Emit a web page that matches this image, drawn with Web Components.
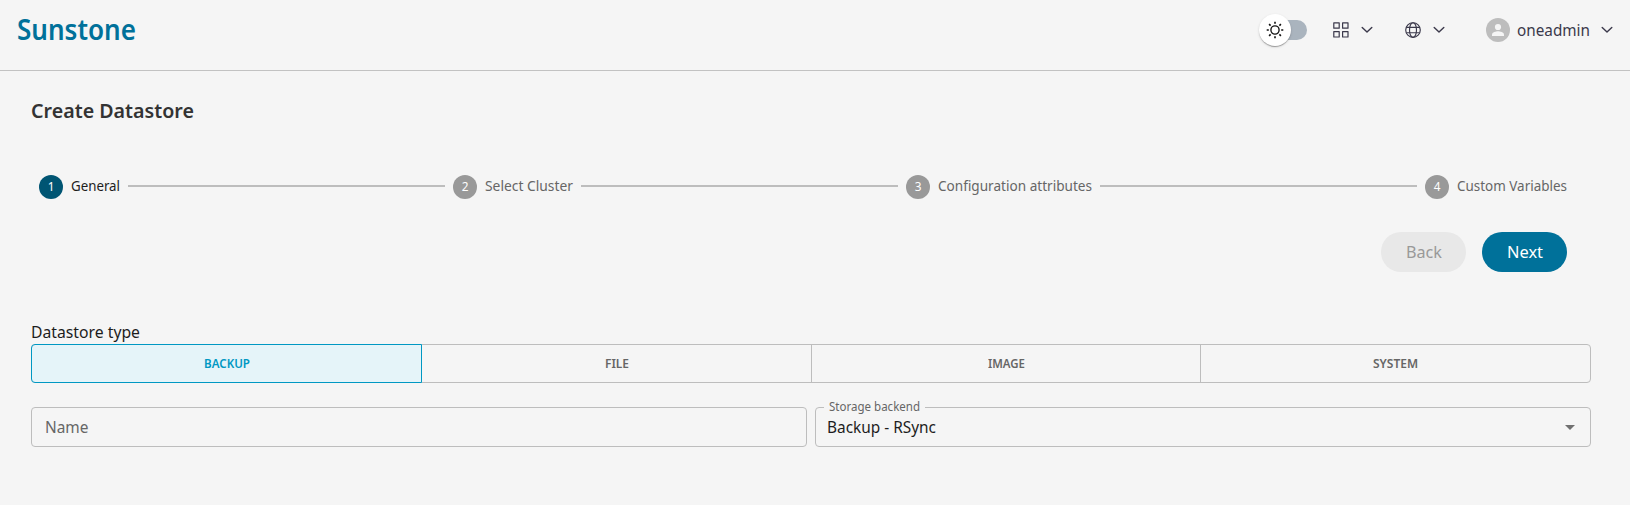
<!DOCTYPE html>
<html lang="en">
<head>
<meta charset="utf-8">
<title>Sunstone</title>
<style>
html,body{margin:0;padding:0;background:#f5f5f5;}
body{font-family:"Noto Sans","Open Sans",sans-serif;color:#1d1d1d;overflow:hidden;height:505px}
</style>
</head>
<body>
<sun-app></sun-app>
<script>
const define=(name,html,setup)=>{
  const t=document.createElement('template');
  t.innerHTML=html;
  customElements.define(name,class extends HTMLElement{
    connectedCallback(){
      if(this.shadowRoot)return;
      this.attachShadow({mode:'open'}).appendChild(t.content.cloneNode(true));
      if(setup)setup(this,this.shadowRoot);
    }
  });
};

/* One line of text condensed or expanded to a set width */
define('fit-text',`<style>
:host{display:block;flex:none;white-space:nowrap}
span{display:inline-block;transform-origin:0 50%;white-space:nowrap}
</style><span><slot></slot></span>`,(el,root)=>{
  const w=+el.getAttribute('w'),s=root.querySelector('span');
  el.style.width=w+'px';
  s.style.transform='scaleX('+(w/s.getBoundingClientRect().width)+')';
});

define('chevron-icon',`<style>:host{display:block;flex:none;width:12px;height:8px}svg{display:block}</style>
<svg width="12" height="8" viewBox="0 0 12 8" fill="none" stroke="#3b394b" stroke-width="1.4" stroke-linecap="round" stroke-linejoin="round"><path d="M1.2 1.5 6 6.1l4.8-4.6"/></svg>`);

define('grid-icon',`<style>:host{display:block;flex:none;width:16px;height:16px}svg{display:block}</style>
<svg width="16" height="16" viewBox="0 0 16 16" fill="none" stroke="#3b394b" stroke-width="1.2" stroke-linejoin="round"><rect x=".8" y=".8" width="5.4" height="5.4"/><rect x="9.6" y=".8" width="5.4" height="5.4"/><rect x=".8" y="9.6" width="5.4" height="5.4"/><rect x="9.6" y="9.6" width="5.4" height="5.4"/></svg>`);

define('globe-icon',`<style>:host{display:block;flex:none;width:16px;height:16px}svg{display:block}</style>
<svg width="16" height="16" viewBox="0 0 16 16" fill="none" stroke="#3b394b" stroke-width="1.15"><circle cx="8" cy="8" r="7.3"/><ellipse cx="8" cy="8" rx="3.5" ry="7.3"/><path d="M1.4 5.3h13.2M1.4 10.7h13.2"/></svg>`);

define('user-avatar',`<style>:host{display:block;flex:none;width:24px;height:24px}svg{display:block}</style>
<svg width="24" height="24" viewBox="0 0 24 24"><circle cx="12" cy="12" r="12" fill="#bdbdbd"/><circle cx="12" cy="9" r="3.1" fill="#f5f5f5"/><path d="M6 18v-1.5c0-2 4-3.2 6-3.2s6 1.2 6 3.2V18z" fill="#f5f5f5"/></svg>`);

define('theme-switch',`<style>
:host{display:flex;flex:none;align-items:center;width:48px;height:32px}
.track{width:42px;height:20px;margin-left:6px;border-radius:10px;background:#aab4be;display:flex;align-items:center}
.thumb{flex:none;width:32px;height:32px;margin-left:-6px;border-radius:50%;background:#fff;box-shadow:0 2px 1px -1px #0003,0 1px 1px #00000024,0 1px 3px #0000001f}
svg{display:block}
</style><div class="track"><div class="thumb"><svg width="32" height="32" viewBox="0 0 32 32" fill="none" stroke="#111" stroke-width="1.35"><circle cx="16" cy="16" r="4.1"/><path stroke-linecap="butt" stroke-width="1.6" d="M16 7.7v2.1M16 22.2v2.1M7.7 16h2.1M22.2 16h2.1M10.1 10.1l1.5 1.5M20.4 20.4l1.5 1.5M21.9 10.1l-1.5 1.5M11.6 20.4l-1.5 1.5"/></svg></div></div>`);

define('app-header',`<style>
:host{display:flex;box-sizing:border-box;height:71px;padding:0 17px 10px 16px;align-items:center;border-bottom:1px solid #c2c2c2;color:#3b394b}
.brand{font-size:28px;line-height:36px;font-weight:600;color:#00719a;margin:-2px 0 0 .5px}
.tools{margin-left:auto;display:flex;align-items:center}
.g{display:flex;align-items:center}
.a{margin-left:26px}.a chevron-icon{margin-left:12px}
.b{margin-left:32px}.b chevron-icon{margin-left:12px}
.c{margin-left:41px;gap:7px}.c chevron-icon{margin-left:4px}
.user{font-size:15.6px;line-height:24px}
</style>
<fit-text class="brand" w="119">Sunstone</fit-text>
<div class="tools"><theme-switch></theme-switch>
<div class="g a"><grid-icon></grid-icon><chevron-icon></chevron-icon></div>
<div class="g b"><globe-icon></globe-icon><chevron-icon></chevron-icon></div>
<div class="g c"><user-avatar></user-avatar><fit-text class="user" w="73">oneadmin</fit-text><chevron-icon></chevron-icon></div>
</div>`);

define('wizard-steps',`<style>
:host{display:flex;align-items:center;gap:8px;height:24px}
.step{display:flex;flex:none;align-items:center;gap:8px;color:#666}
.step.on{color:#1d1d1d}
.dot{width:24px;height:24px;border-radius:50%;background:#999;color:#fff;font-size:11.8px;line-height:23px;text-align:center}
.on .dot{background:#005573}
fit-text{font-size:13.7px;line-height:20px;margin-top:-2px}
i{flex:1;height:2px;background:#bdbdbd;margin-top:-2px}
</style>
<div class="step on"><div class="dot">1</div><fit-text w="49">General</fit-text></div><i></i>
<div class="step"><div class="dot">2</div><fit-text w="88">Select Cluster</fit-text></div><i></i>
<div class="step"><div class="dot">3</div><fit-text w="154">Configuration attributes</fit-text></div><i></i>
<div class="step"><div class="dot">4</div><fit-text w="110">Custom Variables</fit-text></div>`);

define('pill-button',`<style>
:host{display:flex;flex:none;width:85px;height:40px;border-radius:20px;align-items:center;justify-content:center;background:#00719a;color:#fff;font-size:15.6px;line-height:24px}
:host([disabled]){background:#e8e8e8;color:#999}
</style><slot></slot>`);

define('type-toggle',`<style>
:host{display:grid;grid-template-columns:390px 390px 389px 1fr;box-sizing:border-box;height:39px;border:1px solid #bdbdbd;border-radius:4px;font-size:12px;font-weight:600;line-height:18px;color:#666}
div{display:flex;align-items:center;justify-content:center;border-right:1px solid #bdbdbd}
div:last-child{border-right:0}
.on{margin:-1px 0 -1px -1px;border:1px solid #0098c3;border-radius:4px 0 0 4px;background:#e5f4f9;color:#0098c3}
</style>
<div class="on"><fit-text w="46">BACKUP</fit-text></div><div><fit-text w="24">FILE</fit-text></div><div><fit-text w="37">IMAGE</fit-text></div><div><fit-text w="45">SYSTEM</fit-text></div>`);

define('text-field',`<style>
:host{display:flex;align-items:center;box-sizing:border-box;height:40px;padding-left:13px;border:1px solid #bdbdbd;border-radius:4px;font-size:15.6px;line-height:24px;color:#666}
</style><slot></slot>`);

define('select-field',`<style>
:host{display:flex;position:relative;align-items:center;justify-content:space-between;box-sizing:border-box;height:40px;padding:0 15px 0 11px;border:1px solid #bdbdbd;border-radius:4px;font-size:15.6px;line-height:24px;color:#1d1d1d}
.label{position:absolute;left:8px;top:-11px;padding:0 5px 0 5px;background:#f5f5f5;font-size:11.7px;line-height:18px;color:#666}
svg{display:block}
</style><div class="label"><slot name="label"></slot></div><slot></slot><svg width="10" height="5" viewBox="0 0 10 5"><path d="M0 0h10L5 5z" fill="#707070"/></svg>`);

define('sun-app',`<style>
:host{display:block}
main{padding:0 39px 0 31px}
.title{font-size:20.5px;line-height:28px;font-weight:600;color:#333;padding-top:25px}
wizard-steps{margin:51px 24px 0 8px}
.actions{display:flex;justify-content:flex-end;gap:16px;margin:33px 24px 0 0}
.lbl{font-size:15.6px;line-height:24px;margin-top:48px}
.fields{display:grid;grid-template-columns:1fr 1fr;gap:8px;margin-top:24px}
</style>
<app-header></app-header>
<main>
<fit-text class="title" w="163">Create Datastore</fit-text>
<wizard-steps></wizard-steps>
<div class="actions"><pill-button disabled><fit-text w="36">Back</fit-text></pill-button><pill-button><fit-text w="36">Next</fit-text></pill-button></div>
<fit-text class="lbl" w="109">Datastore type</fit-text>
<type-toggle></type-toggle>
<div class="fields">
<text-field><fit-text w="43.5">Name</fit-text></text-field>
<select-field><fit-text slot="label" w="91">Storage backend</fit-text><fit-text w="109">Backup - RSync</fit-text></select-field>
</div>
</main>`);
</script>
</body>
</html>
